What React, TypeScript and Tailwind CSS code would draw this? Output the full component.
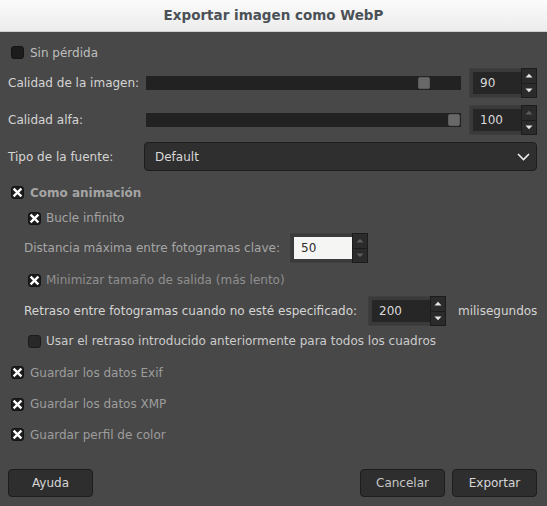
import React from "react";

const font = { fontFamily: '"DejaVu Sans", "Liberation Sans", sans-serif' };

function CheckBox({ checked }: { checked: boolean }) {
  return (
    <span className="flex h-[13px] w-[13px] shrink-0 items-center justify-center rounded-[3px] border border-[#141414] bg-[#1c1c1c]">
      {checked && (
        <svg width="11" height="11" viewBox="0 0 11 11">
          <path d="M2.4 2.4 L8.6 8.6 M8.6 2.4 L2.4 8.6" stroke="#ffffff" strokeWidth="2.3" strokeLinecap="square" />
        </svg>
      )}
    </span>
  );
}

function Arrow({ up, dim }: { up?: boolean; dim?: boolean }) {
  return (
    <svg width="8" height="5" viewBox="0 0 8 5">
      <path d={up ? "M0.5 4.5 L4 0.8 L7.5 4.5 Z" : "M0.5 0.5 L4 4.2 L7.5 0.5 Z"} fill={dim ? "#5c5c5c" : "#e6e6e6"} />
    </svg>
  );
}

interface SpinProps {
  value: string;
  entryWidth: string;
  light?: boolean;
  upDim?: boolean;
  downDim?: boolean;
}

function Spin({ value, entryWidth, light, upDim, downDim }: SpinProps) {
  return (
    <div className="flex h-[30px] shrink-0">
      <div className="flex border border-r-0 border-[#3f3f3f] bg-[#3a3a3a] py-[3px] pl-[3px]">
        <div
          className={`flex h-full items-center pl-[7px] text-[12px] ${entryWidth} ${
            light ? "bg-[#f5f5f3] text-[#2e2e2e]" : "bg-[#262626] text-[#dadada]"
          }`}
        >
          {value}
        </div>
      </div>
      <div className="flex w-[16px] flex-col border border-[#1c1c1c] bg-[#2b2b2b]">
        <div className="flex flex-1 items-center justify-center border-b border-[#1c1c1c]">
          <Arrow up dim={upDim} />
        </div>
        <div className="flex flex-1 items-center justify-center">
          <Arrow dim={downDim} />
        </div>
      </div>
    </div>
  );
}

function Slider({ value }: { value: number }) {
  return (
    <div className="flex h-[14px] flex-1 items-center bg-[#222222] px-[1px]">
      <div className="relative h-full w-full">
        <div
          className="absolute top-[1px] h-[12px] w-[12px] rounded-[2px] border border-[#5c5c5c] bg-[#686868]"
          style={{ left: `calc(${value}% - ${(value / 100) * 12}px)` }}
        />
      </div>
    </div>
  );
}

function Button({ label, dim }: { label: string; dim?: boolean }) {
  return (
    <button
      className={`flex h-[28px] w-[85px] items-center justify-center rounded-[4px] border border-[#1d1d1d] bg-[#2e2e2e] text-[12px] ${
        dim ? "text-[#c6c6c6]" : "text-[#d6d6d6]"
      }`}
    >
      {label}
    </button>
  );
}

export default function App() {
  return (
    <div className="flex h-[506px] w-[547px] flex-col bg-[#484848] text-[12px]" style={font}>
      <div className="flex h-[32px] shrink-0 items-center justify-center border-b border-[#cfcfcf] bg-gradient-to-b from-[#fbfbfb] to-[#ececec]">
        <span className="text-[13.5px] font-bold text-[#4b5157]">Exportar imagen como WebP</span>
      </div>

      <div className="mt-[8px] flex h-[25px] items-center gap-[6px] pl-[11px]">
        <CheckBox checked={false} />
        <span className="text-[#bebebe]">Sin pérdida</span>
      </div>

      <div className="mt-[3px] flex h-[30px] items-center pl-[8px] pr-[10px]">
        <span className="w-[138px] shrink-0 text-[#d4d4d4]">Calidad de la imagen:</span>
        <Slider value={90} />
        <div className="ml-[8px]">
          <Spin value="90" entryWidth="w-[48px]" />
        </div>
      </div>

      <div className="mt-[7px] flex h-[30px] items-center pl-[8px] pr-[10px]">
        <span className="w-[138px] shrink-0 text-[#d4d4d4]">Calidad alfa:</span>
        <Slider value={100} />
        <div className="ml-[8px]">
          <Spin value="100" entryWidth="w-[48px]" upDim />
        </div>
      </div>

      <div className="mt-[7px] flex h-[29px] items-center pl-[8px] pr-[10px]">
        <span className="w-[136px] shrink-0 text-[#d4d4d4]">Tipo de la fuente:</span>
        <div className="flex h-full flex-1 items-center justify-between rounded-[4px] border border-[#1d1d1d] bg-[#2f2f2f] pl-[10px] pr-[6px]">
          <span className="text-[#d8d8d8]">Default</span>
          <svg width="13" height="8" viewBox="0 0 13 8">
            <path d="M1 1 L6.5 6.5 L12 1" fill="none" stroke="#eeeeee" strokeWidth="1.6" />
          </svg>
        </div>
      </div>

      <div className="mt-[9px] flex h-[25px] items-center gap-[6px] pl-[11px]">
        <CheckBox checked />
        <span className="font-bold text-[#a4a4a4]">Como animación</span>
      </div>

      <div className="mt-[1px] flex h-[24px] items-center gap-[5px] pl-[28px]">
        <CheckBox checked />
        <span className="text-[#a4a4a4]">Bucle infinito</span>
      </div>

      <div className="mt-[3px] flex h-[30px] items-center pl-[24px]">
        <span className="w-[266px] shrink-0 text-[#a6a6a6]">Distancia máxima entre fotogramas clave:</span>
        <Spin value="50" entryWidth="w-[58px]" light upDim downDim />
      </div>

      <div className="mt-[5px] flex h-[24px] items-center gap-[5px] pl-[28px]">
        <CheckBox checked />
        <span className="text-[#8f8f8f]">Minimizar tamaño de salida (más lento)</span>
      </div>

      <div className="mt-[4px] flex h-[30px] items-center pl-[24px]">
        <span className="w-[344px] shrink-0 text-[#d4d4d4]">Retraso entre fotogramas cuando no esté especificado:</span>
        <Spin value="200" entryWidth="w-[58px]" />
        <span className="ml-[12px] text-[#d4d4d4]">milisegundos</span>
      </div>

      <div className="mt-[3px] flex h-[24px] items-center gap-[5px] pl-[28px]">
        <span className="h-[13px] w-[13px] shrink-0 rounded-[3px] border border-[#1a1a1a] bg-[#282828]" />
        <span className="text-[#cbcbcb]">Usar el retraso introducido anteriormente para todos los cuadros</span>
      </div>

      <div className="mt-[7px] flex h-[25px] items-center gap-[6px] pl-[11px]">
        <CheckBox checked />
        <span className="text-[#9d9d9d]">Guardar los datos Exif</span>
      </div>

      <div className="mt-[7px] flex h-[24px] items-center gap-[6px] pl-[11px]">
        <CheckBox checked />
        <span className="text-[#9d9d9d]">Guardar los datos XMP</span>
      </div>

      <div className="mt-[6px] flex h-[25px] items-center gap-[6px] pl-[11px]">
        <CheckBox checked />
        <span className="text-[#9d9d9d]">Guardar perfil de color</span>
      </div>

      <div className="mt-[22px] flex items-center pl-[8px] pr-[10px]">
        <Button label="Ayuda" />
        <div className="ml-auto flex gap-[7px]">
          <Button label="Cancelar" dim />
          <Button label="Exportar" />
        </div>
      </div>
    </div>
  );
}
